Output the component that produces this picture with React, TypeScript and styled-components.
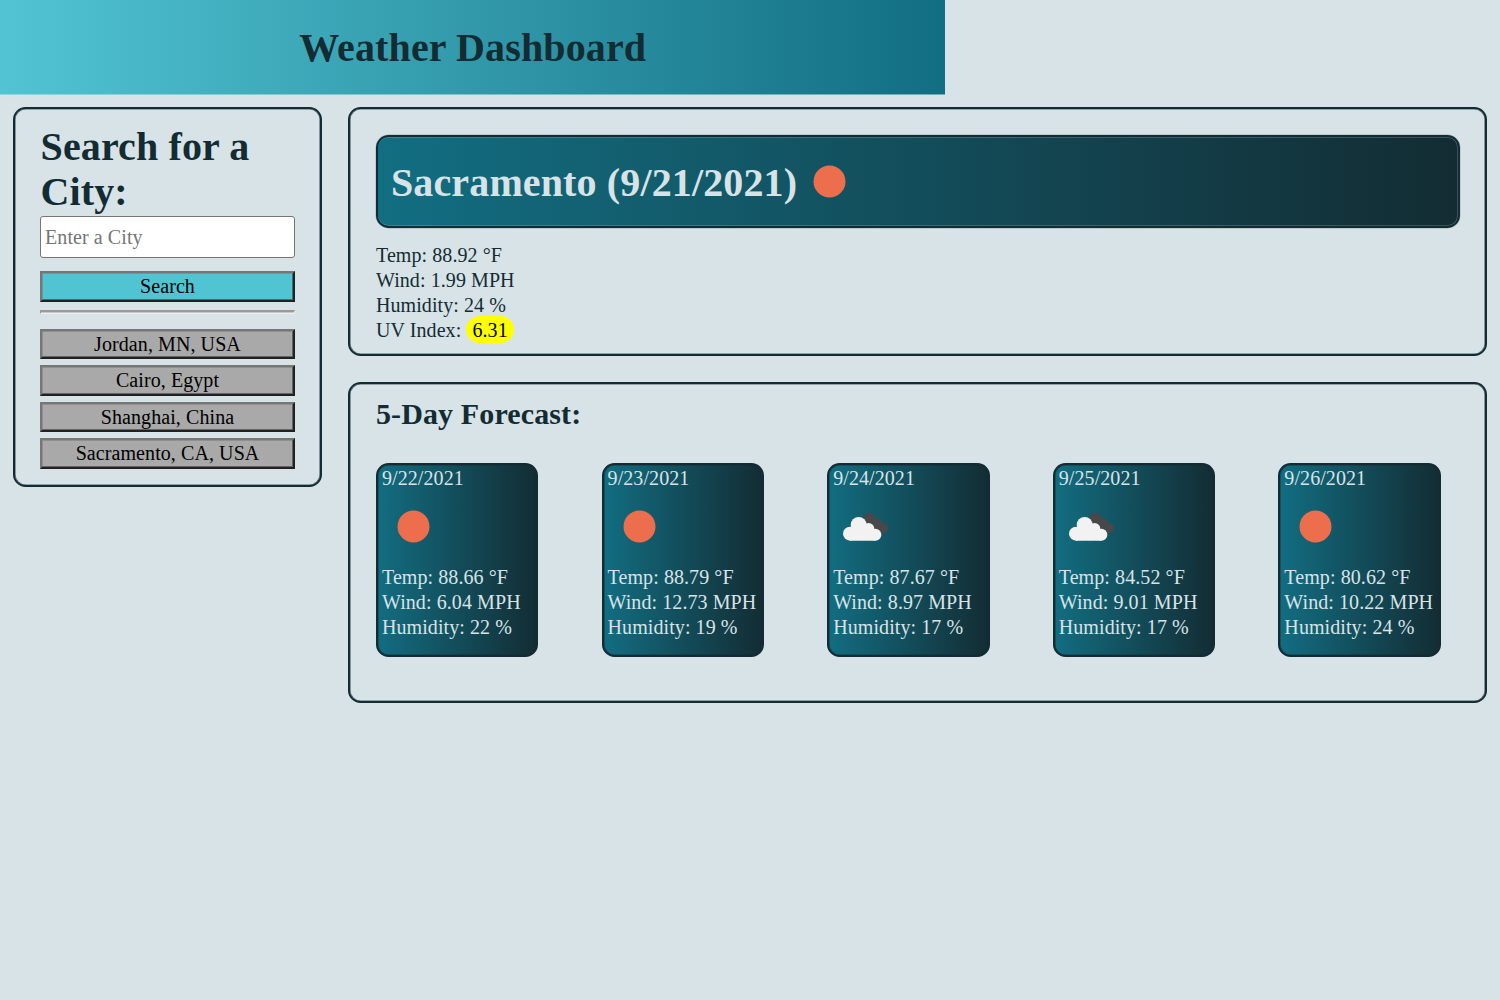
import React from "react";
import styled, { createGlobalStyle, css } from "styled-components";

const ink = "#132c33";
const teal = "#126e82";
const aqua = "#51c4d3";
const mist = "#d8e3e7";

const GlobalStyle = createGlobalStyle`
  * { box-sizing: border-box; margin: 0; padding: 0; }
  body {
    background: ${mist};
    color: ${ink};
    font-family: "Liberation Serif", "Times New Roman", serif;
    font-size: 20px;
    line-height: 25px;
    letter-spacing: 0.08px;
  }
`;

const frame = css`
  border: 2px solid ${ink};
  border-radius: 12.6px;
`;

const Header = styled.header`
  width: 945.4px;
  height: 95px;
  display: flex;
  align-items: center;
  justify-content: center;
  border-bottom: 1px solid rgba(216, 227, 231, 0.5);
  background: linear-gradient(to right, ${aqua}, ${teal}) border-box;
`;

const Title = styled.h1`
  font-size: 40px;
  line-height: 45px;
  letter-spacing: 0.13px;
  padding-top: 1px;
`;

const Layout = styled.div`
  display: flex;
  align-items: flex-start;
  gap: 25.6px;
  padding: 12px 13px 0;
`;

const Sidebar = styled.aside`
  ${frame}
  box-shadow: inset 0 0 0 0.6px rgba(19, 44, 51, 0.7);
  width: 309.4px;
  height: 379.6px;
  padding: 15px 25px 0;
`;

const SidebarTitle = styled.h2`
  font-size: 40px;
  line-height: 45px;
  letter-spacing: 0.13px;
  margin-bottom: 2px;
  padding-left: 0.5px;
`;

const CityInput = styled.input`
  display: block;
  width: 255px;
  height: 42px;
  padding: 0 4px;
  border: 1px solid #767676;
  border-radius: 3px;
  background: #fff;
  font: inherit;
  letter-spacing: inherit;
  &::placeholder { color: #757575; }
`;

const Button = styled.button<{ $primary?: boolean }>`
  display: block;
  width: 255px;
  height: 30.7px;
  padding-bottom: 1px;
  border: 2px solid;
  border-color: #767676 #212121 #212121 #767676;
  box-shadow: inset 1px 1px 0 rgba(118, 118, 118, 0.5), inset -1px -1px 0 rgba(33, 33, 33, 0.5);
  background: ${(p) => (p.$primary ? aqua : "#a9a9a9")};
  color: #000;
  font: inherit;
  letter-spacing: inherit;
  line-height: 24px;
  margin-top: ${(p) => (p.$primary ? "13px" : "0")};
`;

const Divider = styled.hr`
  height: 4px;
  margin: 8.4px 0 14.7px;
  border: 1px solid;
  border-width: 2px 1px 1px;
  border-color: #9a9a9a #eeeeee #eeeeee #9a9a9a;
  background: #c4c8ca;
`;

const History = styled.div`
  display: flex;
  flex-direction: column;
  gap: 5.8px;
`;

const Main = styled.main`
  flex: 1;
  display: flex;
  flex-direction: column;
  gap: 26px;
`;

const Panel = styled.section<{ $height: number; $top: number }>`
  ${frame}
  box-shadow: inset 0 0 0 0.6px rgba(19, 44, 51, 0.7);
  height: ${(p) => p.$height}px;
  padding: ${(p) => p.$top}px 25px 0 26px;
`;

const Banner = styled.div`
  ${frame}
  height: 93px;
  display: flex;
  align-items: center;
  padding-left: 13px;
  color: ${mist};
  background: linear-gradient(to right, ${teal}, ${ink}) border-box;
  box-shadow: inset -1px 0 0 rgba(216, 227, 231, 0.2), inset 0 1px 0 rgba(216, 227, 231, 0.2),
    inset 0 -1px 0 rgba(216, 227, 231, 0.2), 0 0 0 0.4px rgba(19, 44, 51, 0.3);
`;

const CityName = styled.h2`
  font-size: 40px;
  line-height: 45px;
  letter-spacing: 0.13px;
  padding-top: 1px;
`;

const SunIcon = styled.svg<{ $banner?: boolean }>`
  display: block;
  width: 33px;
  height: 33px;
  margin: ${(p) => (p.$banner ? "0 0 0 15.6px" : "19px 0 0 15px")};
`;

const CloudIcon = styled.svg`
  display: block;
  width: 60px;
  height: 45px;
  margin: 14px 0 -7px 2px;
`;

const Stats = styled.div`
  margin-top: 15px;
`;

const Line = styled.p`
  line-height: 25px;
  white-space: nowrap;
`;

const UvBadge = styled.span`
  display: inline-block;
  margin-top: -2px;
  padding: 2px 6.5px 0 6px;
  border-radius: 13.5px;
  background: #ffff00;
  color: #000;
`;

const ForecastTitle = styled.h3`
  font-size: 30px;
  line-height: 34px;
  letter-spacing: 0.12px;
`;

const Cards = styled.div`
  display: grid;
  grid-template-columns: repeat(5, 162.5px);
  column-gap: 63.1px;
  margin-top: 32px;
`;

const Card = styled.article`
  ${frame}
  height: 194px;
  padding: 1px 4px 0;
  color: ${mist};
  background: linear-gradient(to right, ${teal}, ${ink}) border-box;
  box-shadow: inset 0 0 0 0.6px rgba(19, 44, 51, 0.7);
`;

const CardIcon = styled.div`
  height: 74px;
  overflow: hidden;
`;

function Sun({ banner }: { banner?: boolean }) {
  return (
    <SunIcon $banner={banner} viewBox="0 0 33 33">
      <circle cx="16.5" cy="16.5" r="16" fill="#ec6e4c" />
    </SunIcon>
  );
}

function Cloud() {
  return (
    <CloudIcon viewBox="0 0 180 135">
      <g fill="#48484a">
        <circle cx="103" cy="42" r="19" />
        <circle cx="126" cy="56" r="16" />
        <circle cx="143" cy="69" r="16" />
        <path d="M90 55L120 40L145 84L120 84Z" />
      </g>
      <g fill="#f2f2f2">
        <circle cx="45" cy="86" r="21" />
        <circle cx="71" cy="60" r="24" />
        <circle cx="101" cy="71" r="17" />
        <circle cx="121" cy="89" r="18" />
        <path d="M45 107V70H110L121 80V107Z" />
      </g>
    </CloudIcon>
  );
}

const history = ["Jordan, MN, USA", "Cairo, Egypt", "Shanghai, China", "Sacramento, CA, USA"];

const days = [
  { date: "9/22/2021", icon: "sun", temp: "88.66", wind: "6.04", humidity: 22 },
  { date: "9/23/2021", icon: "sun", temp: "88.79", wind: "12.73", humidity: 19 },
  { date: "9/24/2021", icon: "cloud", temp: "87.67", wind: "8.97", humidity: 17 },
  { date: "9/25/2021", icon: "cloud", temp: "84.52", wind: "9.01", humidity: 17 },
  { date: "9/26/2021", icon: "sun", temp: "80.62", wind: "10.22", humidity: 24 },
];

export default function App() {
  return (
    <>
      <GlobalStyle />
      <Header>
        <Title>Weather Dashboard</Title>
      </Header>
      <Layout>
        <Sidebar>
          <SidebarTitle>Search for a City:</SidebarTitle>
          <CityInput placeholder="Enter a City" />
          <Button $primary>Search</Button>
          <Divider />
          <History>
            {history.map((city) => (
              <Button key={city}>{city}</Button>
            ))}
          </History>
        </Sidebar>
        <Main>
          <Panel $height={249.4} $top={26}>
            <Banner>
              <CityName>Sacramento (9/21/2021)</CityName>
              <Sun banner />
            </Banner>
            <Stats>
              <Line>Temp: 88.92 °F</Line>
              <Line>Wind: 1.99 MPH</Line>
              <Line>Humidity: 24 %</Line>
              <Line>
                UV Index: <UvBadge>6.31</UvBadge>
              </Line>
            </Stats>
          </Panel>
          <Panel $height={320.8} $top={13}>
            <ForecastTitle>5-Day Forecast:</ForecastTitle>
            <Cards>
              {days.map((day) => (
                <Card key={day.date}>
                  <Line>{day.date}</Line>
                  <CardIcon>{day.icon === "sun" ? <Sun /> : <Cloud />}</CardIcon>
                  <Line>Temp: {day.temp} °F</Line>
                  <Line>Wind: {day.wind} MPH</Line>
                  <Line>Humidity: {day.humidity} %</Line>
                </Card>
              ))}
            </Cards>
          </Panel>
        </Main>
      </Layout>
    </>
  );
}
